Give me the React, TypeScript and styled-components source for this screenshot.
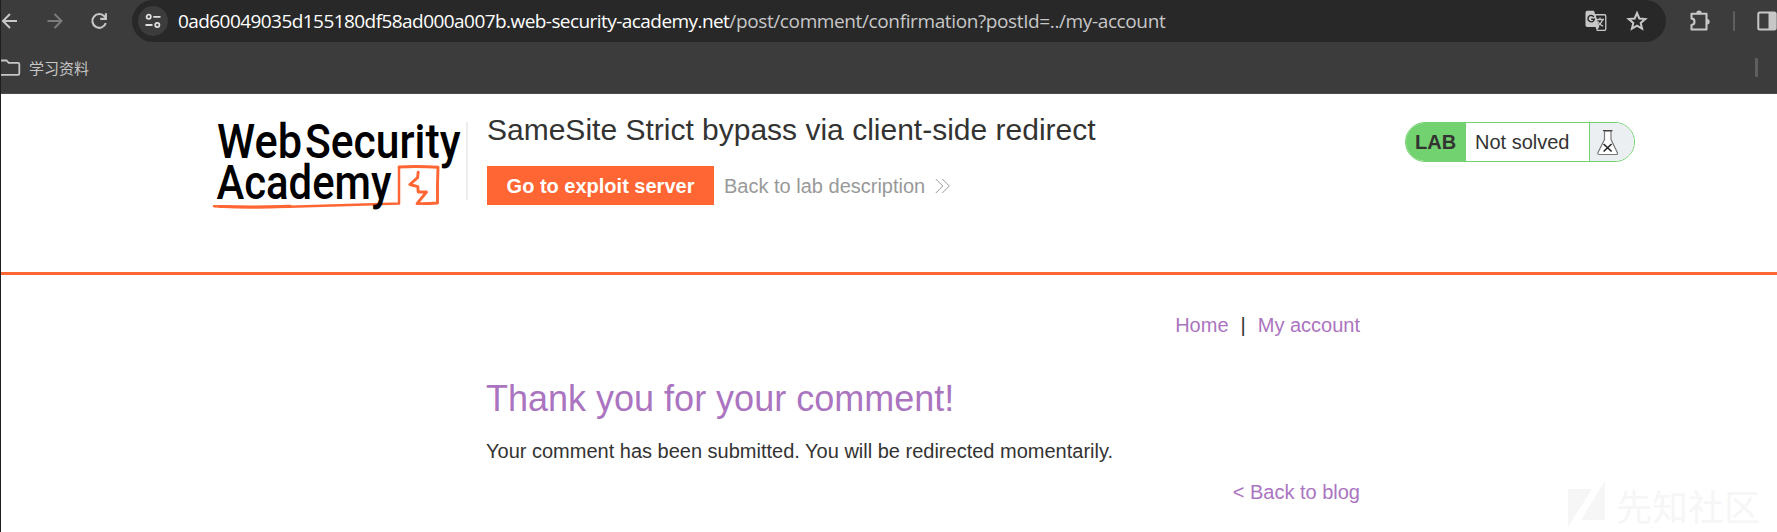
import React from "react";
import styled, { createGlobalStyle } from "styled-components";

const Global = createGlobalStyle`
  *, *::before, *::after { box-sizing: border-box; }
  body { margin: 0; background: #fff; overflow: hidden; }
`;

const Window = styled.div`
  width: 1777px;
  height: 532px;
  overflow: hidden;
  position: relative;
  border-left: 1px solid #1f1f1f;
  font: 20px/25px "Liberation Sans", Arial, sans-serif;
  color: #333332;
`;

const Chrome = styled.div`
  height: 94px;
  background: #3c3c3c;
  border-bottom: 1px solid #4b4b4b;
`;

const Toolbar = styled.div`
  height: 42px;
  display: flex;
  align-items: center;
  color: #c7c7c7;
`;

const NavButtons = styled.div`
  width: 132px;
  display: flex;
  align-items: center;
  gap: 25px;
  margin-left: -1px;
`;

const Omnibox = styled.div`
  width: 1535px;
  height: 42px;
  border-radius: 21px;
  background: #282828;
  display: flex;
  align-items: center;
  padding: 0 18px 0 6px;
`;

const SiteInfo = styled.div`
  width: 30px;
  height: 30px;
  border-radius: 50%;
  background: #3c3c3c;
  display: grid;
  place-items: center;
`;

const Url = styled.div`
  flex: 1;
  margin-left: 10px;
  font: 19px/26px "Open Sans", "Noto Sans", sans-serif;
  letter-spacing: -0.38px;
  color: #c7c7c7;
  white-space: nowrap;
`;

const Domain = styled.span`
  color: #fff;
  letter-spacing: -0.56px;
`;

const OmniActions = styled.div`
  display: flex;
  gap: 19px;
`;

const ToolbarRight = styled.div`
  display: flex;
  align-items: center;
  gap: 22px;
  margin-left: 23px;
`;

const Divider = styled.div<{ $w: number; $h: number }>`
  flex: none;
  width: ${(p) => p.$w}px;
  height: ${(p) => p.$h}px;
  border-radius: 1px;
  background: #5f5f5f;
`;

const Bookmarks = styled.div`
  height: 51px;
  display: flex;
  align-items: center;
  padding: 0 19px 0 0;
  color: #c7c7c7;
  font: 15px/20px "Noto Sans CJK SC", sans-serif;
`;

const BookmarkLabel = styled.span`
  flex: 1;
  margin-left: 8px;
`;

const LabHeader = styled.header`
  height: 181px;
  border-bottom: 3px solid #ff6633;
  display: flex;
  align-items: flex-start;
  padding: 28px 142px 0 211px;
`;

const LogoCell = styled.div`
  width: 256px;
  height: 78px;
  border-right: 2px solid #ededed;
`;

const LogoSvg = styled.svg`
  display: block;
  overflow: visible;
`;

const TitleCell = styled.div`
  flex: 1;
  padding-left: 19px;
  margin-top: -11px;
`;

const Title = styled.h2`
  margin: 0 0 17px;
  font-size: 30px;
  line-height: 38px;
  font-weight: 400;
`;

const Actions = styled.div`
  display: flex;
  align-items: center;
  gap: 10px;
`;

const ExploitButton = styled.a`
  height: 39px;
  width: 227px;
  background: #ff6633;
  color: #fff;
  font-weight: 700;
  line-height: 40px;
  text-align: center;
`;

const BackLink = styled.a`
  display: flex;
  align-items: center;
  gap: 10px;
  padding-top: 1px;
  color: #999;
`;

const Badge = styled.div`
  width: 230px;
  height: 40px;
  border: 1px solid #72d26f;
  border-radius: 20px;
  overflow: hidden;
  display: flex;
  line-height: 39px;
`;

const BadgeTag = styled.div`
  width: 60px;
  padding-left: 9px;
  background: #72d26f;
  font-weight: 700;
`;

const BadgeState = styled.div`
  width: 124px;
  padding-left: 9px;
  border-right: 1px solid #72d26f;
`;

const BadgeFlask = styled.div`
  flex: 1;
  padding: 6px 0 0 6px;
  background: #ebeff2;
  line-height: 0;
`;

const Content = styled.main`
  width: 874px;
  margin-left: 485px;
  padding-top: 38px;
`;

const Nav = styled.nav`
  display: flex;
  justify-content: flex-end;
  gap: 12px;
`;

const Link = styled.a`
  color: #ab74c0;
`;

const Heading = styled.h1`
  margin: 38px 0 17px;
  font-size: 36px;
  line-height: 46px;
  font-weight: 400;
  color: #ab74c0;
`;

const Message = styled.p`
  margin: 0 0 16px;
`;

const BackRow = styled.div`
  text-align: right;
`;

const Watermark = styled.div`
  position: absolute;
  right: 17px;
  bottom: 1px;
  display: flex;
  gap: 11px;
  color: #f6f6f6;
  font: 36px/52px "Noto Sans CJK SC", sans-serif;
`;

const BackIcon = () => (
  <svg width="20" height="20" viewBox="0 0 20 20" fill="none" stroke="currentColor" strokeWidth="2">
    <path d="M17 10H3.5M10 3L3 10l7 7" />
  </svg>
);

const ForwardIcon = () => (
  <svg width="20" height="20" viewBox="0 0 20 20" fill="none" stroke="#7c7c7c" strokeWidth="2">
    <path d="M2.500 10h13.500M9.500 3l7 7-7 7" />
  </svg>
);

const ReloadIcon = () => (
  <svg width="20" height="20" viewBox="0 0 20 20" fill="none" stroke="currentColor" strokeWidth="2.100">
    <path d="M15.800 12.200A6.900 6.900 0 1 1 14.500 5.400L16 7M15.900 2.200v5.700H10.200" />
  </svg>
);

const TuneIcon = () => (
  <svg width="16" height="16" viewBox="0 0 16 16" fill="none" stroke="#e0e0e0" strokeWidth="1.800">
    <circle cx="3.700" cy="3.800" r="2.100" />
    <path d="M8.300 3.800H15.500M.5 12h7" />
    <circle cx="12.300" cy="12" r="2.100" />
  </svg>
);

const TranslateIcon = () => (
  <svg width="22" height="22" viewBox="0 0 22 22">
    <path d="M2.200.8H9l1 3.300h9.600a1.800 1.800 0 0 1 1.800 1.800v13.400a1.800 1.800 0 0 1-1.800 1.800h-7.800L10.600 17H2.200A1.800 1.800 0 0 1 .5 15.200V2.500A1.800 1.800 0 0 1 2.200.8z" fill="#c7c7c7" />
    <path d="M10.800 5.500h8.500q.8 0 .8.8v12.600q0 .8-.8.8h-7l2-2.800z" fill="#282828" />
    <path d="M8.800 6.800A3.200 3.200 0 1 0 9.300 9.300H6.200" fill="none" stroke="#282828" strokeWidth="1.400" />
    <path d="M11.500 9.500h7.500M15 7.500v2M17.500 9.700q-1 4-5.200 6.300M12.800 11.500q1.500 3 5.200 4.700" fill="none" stroke="#c7c7c7" strokeWidth="1.300" />
  </svg>
);

const StarIcon = () => (
  <svg width="22" height="22" viewBox="0 0 22 22" fill="none" stroke="currentColor" strokeWidth="2">
    <path d="M11 3l2.300 5.500 6 .5-4.600 3.900 1.400 5.800L11 15.600l-5.100 3.100 1.400-5.800L2.700 9l6-.5z" />
  </svg>
);

const PuzzleIcon = () => (
  <svg width="22" height="22" viewBox="0 0 22 22">
    <path d="M2.500 3.800h15v15.700h-15V15q3-.4 3-3.300t-3-3.300z" fill="none" stroke="#c7c7c7" strokeWidth="2.100" strokeLinejoin="round" />
    <path d="M7.300 3.200a2.700 2.700 0 0 1 5.400 0zM18 9a2.700 2.700 0 0 1 0 5.400z" fill="#c7c7c7" />
  </svg>
);

const SidePanelIcon = () => (
  <svg width="20" height="20" viewBox="0 0 20 20">
    <rect x="1.300" y="1.500" width="17.400" height="17" rx="1.500" fill="none" stroke="#c7c7c7" strokeWidth="2" />
    <path d="M11.500 1h7v18h-7z" fill="#c7c7c7" />
  </svg>
);

const FolderIcon = () => (
  <svg width="20" height="18" viewBox="0 0 20 18" fill="none" stroke="currentColor" strokeWidth="1.800">
    <path d="M-1 1.500h6.500l2.200 2.400H17q1.300 0 1.300 1.300v9.300q0 1.300-1.300 1.300H-1" />
  </svg>
);

const Logo = () => (
  <LogoSvg width="252" height="90" viewBox="212 122 252 90">
    <g fill="none" stroke="#ff6633" strokeLinecap="round" strokeLinejoin="round">
      <path d="M214 206.200q34 1.700 75 .5t110-3.200V168" strokeWidth="2.500" />
      <path d="M220 206.600q34 1 70-.4" strokeWidth="3" />
      <path d="M399 167q19-1 39 .3-.8 18-.5 35.700-10 .8-20.500.6L426.500 192h-8.300l-.4-5.300-8-2.200 7.800-6.800.6-5.500" strokeWidth="2.900" />
    </g>
    <g fill="#000" fontFamily="Roboto, sans-serif" fontWeight="500" fontSize="49">
      <text x="217" y="157.700" textLength="85" lengthAdjust="spacingAndGlyphs">Web</text>
      <text x="305" y="157.700" textLength="155.500" lengthAdjust="spacingAndGlyphs">Security</text>
      <text x="216.500" y="198.700" textLength="175" lengthAdjust="spacingAndGlyphs">Academy</text>
    </g>
  </LogoSvg>
);

const ChevronsIcon = () => (
  <svg width="16" height="16" viewBox="0 0 16 16" fill="none" stroke="#999" strokeWidth="1">
    <path d="M.8 1l7 7-7 7M7.300 1l7 7-7 7" />
  </svg>
);

const FlaskIcon = () => (
  <svg width="24" height="28" viewBox="0 0 24 28" strokeWidth="1.200">
    <path d="M8.500 2v8.500L2 23.500q-.6 2 1.200 2h17.200q1.600 0 .9-2L15 10.500V2z" fill="#fff" stroke="#777" />
    <path d="M7 1.700h9.500" stroke="#444" />
    <path d="M7.600 15l8 7.500M15.600 15l-8 7.500" stroke="#222" strokeWidth="1.600" />
  </svg>
);

const WatermarkMark = () => (
  <svg width="37" height="52" viewBox="0 0 37 52" fill="currentColor">
    <path d="M0 10h24L0 48zM37 2v39H13z" />
  </svg>
);

export default function App() {
  return (
    <Window>
      <Global />
      <Chrome>
        <Toolbar>
          <NavButtons>
            <BackIcon />
            <ForwardIcon />
            <ReloadIcon />
          </NavButtons>
          <Omnibox>
            <SiteInfo><TuneIcon /></SiteInfo>
            <Url><Domain>0ad60049035d155180df58ad000a007b.web-security-academy.net</Domain>/post/comment/confirmation?postId=../my-account</Url>
            <OmniActions>
              <TranslateIcon />
              <StarIcon />
            </OmniActions>
          </Omnibox>
          <ToolbarRight>
            <PuzzleIcon />
            <Divider $w={2} $h={20} />
            <SidePanelIcon />
          </ToolbarRight>
        </Toolbar>
        <Bookmarks>
          <FolderIcon />
          <BookmarkLabel>学习资料</BookmarkLabel>
          <Divider $w={3} $h={19} />
        </Bookmarks>
      </Chrome>
      <LabHeader>
        <LogoCell><Logo /></LogoCell>
        <TitleCell>
          <Title>SameSite Strict bypass via client-side redirect</Title>
          <Actions>
            <ExploitButton>Go to exploit server</ExploitButton>
            <BackLink>Back to lab description <ChevronsIcon /></BackLink>
          </Actions>
        </TitleCell>
        <Badge>
          <BadgeTag>LAB</BadgeTag>
          <BadgeState>Not solved</BadgeState>
          <BadgeFlask><FlaskIcon /></BadgeFlask>
        </Badge>
      </LabHeader>
      <Content>
        <Nav>
          <Link>Home</Link>
          <span>|</span>
          <Link>My account</Link>
        </Nav>
        <Heading>Thank you for your comment!</Heading>
        <Message>Your comment has been submitted. You will be redirected momentarily.</Message>
        <BackRow><Link>&lt; Back to blog</Link></BackRow>
      </Content>
      <Watermark><WatermarkMark />先知社区</Watermark>
    </Window>
  );
}
